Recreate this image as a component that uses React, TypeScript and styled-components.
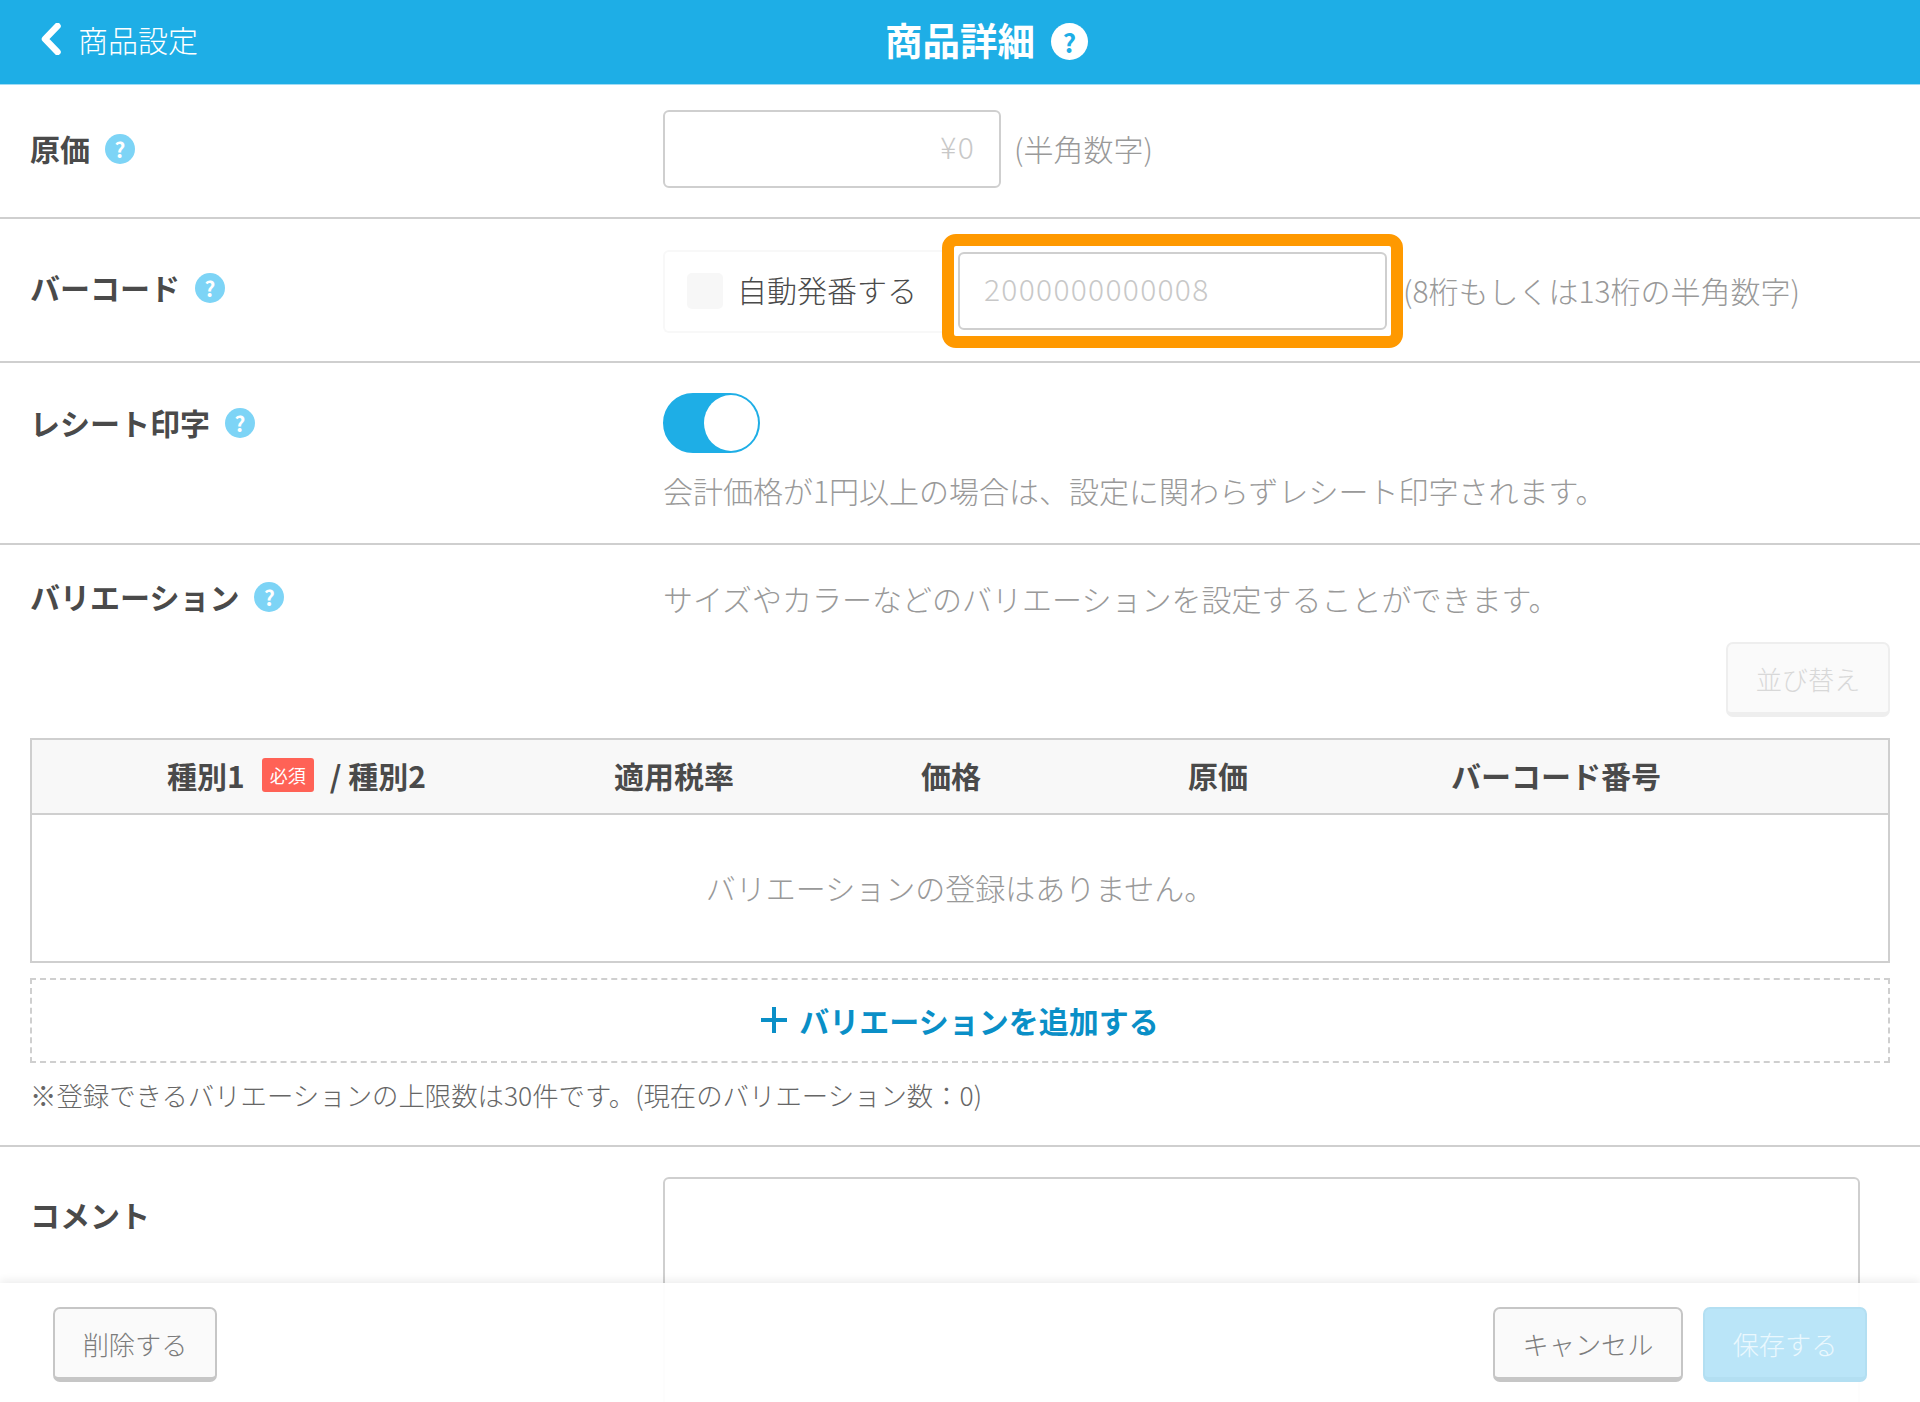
import styled, { createGlobalStyle } from "styled-components";

const GlobalStyle = createGlobalStyle`
  html, body {
    margin: 0;
    padding: 0;
    background: #fff;
  }
  * {
    box-sizing: border-box;
  }
`;

const palette = {
  blue: "#1eaee6",
  lightBlue: "#7dd4f6",
  line: "#cfcfcf",
  label: "#4a4a4a",
  gray: "#999",
  placeholder: "#c8c8c8",
  link: "#0a8fc7",
};

const Page = styled.div`
  position: relative;
  width: 1920px;
  height: 1402px;
  overflow: hidden;
  background: #fff;
  color: ${palette.label};
  font-family: "Noto Sans CJK JP", "Noto Sans", sans-serif;
  font-size: 30px;
  font-weight: 300;
  line-height: 40px;
`;

const Header = styled.header`
  display: grid;
  grid-template-columns: 1fr auto 1fr;
  align-items: center;
  height: 85px;
  padding-bottom: 1px;
  background: ${palette.blue};
  border-bottom: 1px solid #9fdcf5;
  color: #fff;
`;

const BackLink = styled.div`
  display: flex;
  align-items: center;
  gap: 16px;
  padding: 0 0 5px 40px;
`;

const Title = styled.h1`
  margin: 0;
  padding-bottom: 5px;
  font-size: 37.5px;
  font-weight: 700;
  line-height: 44px;
`;

const TitleHelp = styled.div`
  display: flex;
  padding-left: 16px;
`;

const Help = styled.span<{ $size?: number; $inverse?: boolean }>`
  display: inline-flex;
  align-items: center;
  justify-content: center;
  flex: none;
  width: ${(p) => p.$size ?? 30}px;
  height: ${(p) => p.$size ?? 30}px;
  margin-top: ${(p) => (p.$inverse ? 0 : 3)}px;
  border-radius: 50%;
  background: ${(p) => (p.$inverse ? "#fff" : palette.lightBlue)};
  color: ${(p) => (p.$inverse ? palette.blue : "#fff")};
  font-size: ${(p) => (p.$inverse ? 26 : 21)}px;
  font-weight: 700;
  line-height: 1;
`;

const Row = styled.section<{ $pad: string }>`
  display: grid;
  grid-template-columns: 633px 1fr;
  padding: ${(p) => p.$pad};
  border-bottom: 2px solid ${palette.line};
`;

const Label = styled.div<{ $top?: number }>`
  display: flex;
  align-items: center;
  gap: 15px;
  height: 40px;
  margin-top: ${(p) => p.$top ?? 0}px;
  padding-bottom: 5px;
  font-weight: 700;
`;

const Field = styled.div`
  display: flex;
  align-items: center;
`;

const TextBox = styled.div<{ $width: number; $right?: boolean }>`
  display: flex;
  align-items: center;
  justify-content: ${(p) => (p.$right ? "flex-end" : "flex-start")};
  width: ${(p) => p.$width}px;
  height: 78px;
  padding: 0 24px 7px;
  border: 2px solid ${palette.line};
  border-radius: 6px;
  background: #fff;
  color: ${palette.placeholder};
  letter-spacing: 1.3px;
`;

const Hint = styled.span<{ $left?: number }>`
  display: block;
  margin-left: ${(p) => p.$left ?? 0}px;
  padding-bottom: 3px;
  color: ${palette.gray};
`;

const CheckGroup = styled.div`
  display: flex;
  align-items: center;
  gap: 14px;
  width: 279px;
  height: 83px;
  padding-left: 22px;
  border: 2px solid #f8f8f8;
  border-right: 0;
  border-radius: 6px 0 0 6px;
`;

const CheckBox = styled.span`
  flex: none;
  width: 36px;
  height: 36px;
  border-radius: 5px;
  background: #f7f7f7;
`;

const CheckText = styled.span`
  padding-bottom: 5px;
`;

const Highlight = styled.div`
  flex: none;
  padding: 6px 4px;
  border: 12px solid #ff9900;
  border-radius: 14px;
`;

const ToggleWrap = styled.div`
  display: flex;
  flex-direction: column;
  gap: 17px;
  align-items: flex-start;
`;

const Toggle = styled.div`
  display: flex;
  justify-content: flex-end;
  width: 97px;
  height: 60px;
  border: 2px solid ${palette.blue};
  border-radius: 30px;
  background: ${palette.blue};
`;

const Knob = styled.span`
  width: 54px;
  height: 56px;
  border-radius: 50%;
  background: #fff;
`;

const VariationSection = styled.section`
  padding: 33px 30px 30px 30px;
  border-bottom: 2px solid ${palette.line};
`;

const VariationHead = styled.div`
  display: grid;
  grid-template-columns: 633px 1fr;
  align-items: start;
`;

const SortBar = styled.div`
  display: flex;
  justify-content: flex-end;
  margin: 21px 0 21px;
`;

const Button = styled.div<{ $variant?: "default" | "faded" | "primary"; $width: number }>`
  display: flex;
  align-items: center;
  justify-content: center;
  width: ${(p) => p.$width}px;
  height: 75px;
  padding-top: 1px;
  border: 2px solid
    ${(p) =>
      p.$variant === "faded" ? "#eee" : p.$variant === "primary" ? "#b3dff2" : "#c6c6c6"};
  border-bottom-width: 5px;
  border-radius: 7px;
  background: ${(p) => (p.$variant === "primary" ? "#bae5f8" : "#fafafa")};
  color: ${(p) =>
    p.$variant === "faded" ? "#d8d8d8" : p.$variant === "primary" ? "#eaf8fe" : "#7c7c7c"};
  font-size: 26.2px;
`;

const Table = styled.div`
  border: 2px solid ${palette.line};
`;

const TableHead = styled.div`
  display: grid;
  grid-template-columns: 529px 226px 328px 206px 470px 1fr;
  align-items: center;
  height: 75px;
  padding-bottom: 4px;
  border-bottom: 2px solid ${palette.line};
  background: #f8f8f8;
`;

const HeadCell = styled.div`
  display: flex;
  align-items: center;
  justify-content: center;
  font-weight: 700;
`;

const RequiredBadge = styled.span`
  display: flex;
  align-items: center;
  justify-content: center;
  width: 52px;
  height: 34px;
  margin: 0 16px 0 17px;
  border-radius: 3px;
  background: #ff6256;
  color: #fff;
  font-size: 18px;
  font-weight: 400;
`;

const EmptyMessage = styled.div`
  display: flex;
  align-items: center;
  justify-content: center;
  height: 146px;
  padding-bottom: 2px;
  color: ${palette.gray};
`;

const AddRow = styled.div`
  display: flex;
  align-items: center;
  justify-content: center;
  gap: 12px;
  height: 85px;
  margin-top: 15px;
  padding-bottom: 2px;
  border: 2px dashed ${palette.line};
  color: ${palette.link};
  font-weight: 700;
`;

const Note = styled.p`
  margin: 12px 0 0;
  color: #666;
  font-size: 26.4px;
  line-height: 40px;
`;

const CommentRow = styled.section`
  display: grid;
  grid-template-columns: 633px 1197px;
  padding: 30px 30px 0;
`;

const CommentBox = styled.div`
  height: 260px;
  border: 2px solid ${palette.line};
  border-radius: 6px;
`;

// 下部に固定されるアクションバー
const Footer = styled.footer`
  position: absolute;
  left: 0;
  right: 0;
  bottom: 0;
  display: flex;
  justify-content: space-between;
  height: 119px;
  padding: 24px 53px 0;
  background: rgba(255, 255, 255, 0.96);
  box-shadow: 0 -3px 8px rgba(0, 0, 0, 0.07);
`;

const FooterActions = styled.div`
  display: flex;
  gap: 20px;
`;

export default function App() {
  return (
    <Page>
      <GlobalStyle />
      <Header>
        <BackLink>
          <svg width="22" height="32" viewBox="0 0 22 32" fill="none">
            <path
              d="M17.5 3 L5 16 L17.5 29"
              stroke="#fff"
              strokeWidth="6.5"
              strokeLinecap="round"
              strokeLinejoin="round"
            />
          </svg>
          <span>商品設定</span>
        </BackLink>
        <Title>商品詳細</Title>
        <TitleHelp>
          <Help $size={37} $inverse>
            ?
          </Help>
        </TitleHelp>
      </Header>

      <Row $pad="25px 30px 29px">
        <Label $top={20}>
          原価<Help>?</Help>
        </Label>
        <Field>
          <TextBox $width={338} $right>
            ¥0
          </TextBox>
          <Hint $left={13}>(半角数字)</Hint>
        </Field>
      </Row>

      <Row $pad="15px 30px 13px">
        <Label $top={35}>
          バーコード<Help>?</Help>
        </Label>
        <Field>
          <CheckGroup>
            <CheckBox />
            <CheckText>自動発番する</CheckText>
          </CheckGroup>
          <Highlight>
            <TextBox $width={429}>2000000000008</TextBox>
          </Highlight>
          <Hint>(8桁もしくは13桁の半角数字)</Hint>
        </Field>
      </Row>

      <Row $pad="30px 30px 30px">
        <Label $top={11}>
          レシート印字<Help>?</Help>
        </Label>
        <ToggleWrap>
          <Toggle>
            <Knob />
          </Toggle>
          <Hint>会計価格が1円以上の場合は、設定に関わらずレシート印字されます。</Hint>
        </ToggleWrap>
      </Row>

      <VariationSection>
        <VariationHead>
          <Label>
            バリエーション<Help>?</Help>
          </Label>
          <Hint>サイズやカラーなどのバリエーションを設定することができます。</Hint>
        </VariationHead>
        <SortBar>
          <Button $variant="faded" $width={164}>
            並び替え
          </Button>
        </SortBar>
        <Table>
          <TableHead>
            <HeadCell>
              種別1<RequiredBadge>必須</RequiredBadge>/ 種別2
            </HeadCell>
            <HeadCell>適用税率</HeadCell>
            <HeadCell>価格</HeadCell>
            <HeadCell>原価</HeadCell>
            <HeadCell>バーコード番号</HeadCell>
          </TableHead>
          <EmptyMessage>バリエーションの登録はありません。</EmptyMessage>
        </Table>
        <AddRow>
          <svg width="26" height="26" viewBox="0 0 26 26">
            <path d="M13 0 V26 M0 13 H26" stroke="#0a8fc7" strokeWidth="4" />
          </svg>
          <span>バリエーションを追加する</span>
        </AddRow>
        <Note>※登録できるバリエーションの上限数は30件です。(現在のバリエーション数：0)</Note>
      </VariationSection>

      <CommentRow>
        <Label $top={19}>コメント</Label>
        <CommentBox />
      </CommentRow>

      <Footer>
        <Button $width={164}>削除する</Button>
        <FooterActions>
          <Button $width={190}>キャンセル</Button>
          <Button $variant="primary" $width={164}>
            保存する
          </Button>
        </FooterActions>
      </Footer>
    </Page>
  );
}
